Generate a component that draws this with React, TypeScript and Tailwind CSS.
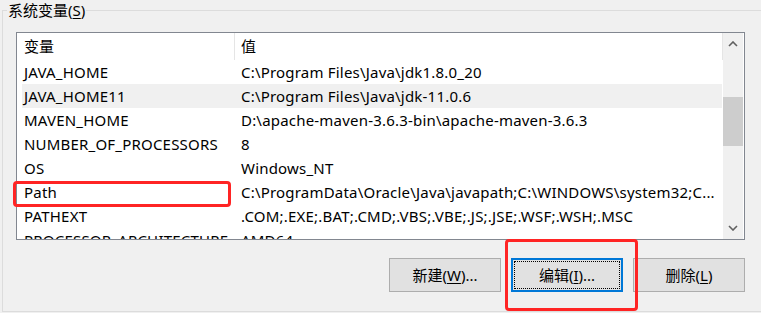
import React from "react";

const rows: [string, string][] = [
  ["JAVA_HOME", "C:\\Program Files\\Java\\jdk1.8.0_20"],
  ["JAVA_HOME11", "C:\\Program Files\\Java\\jdk-11.0.6"],
  ["MAVEN_HOME", "D:\\apache-maven-3.6.3-bin\\apache-maven-3.6.3"],
  ["NUMBER_OF_PROCESSORS", "8"],
  ["OS", "Windows_NT"],
  ["Path", "C:\\ProgramData\\Oracle\\Java\\javapath;C:\\WINDOWS\\system32;C..."],
  ["PATHEXT", ".COM;.EXE;.BAT;.CMD;.VBS;.VBE;.JS;.JSE;.WSF;.WSH;.MSC"],
  ["PROCESSOR_ARCHITECTURE", "AMD64"],
];

function Chevron({ down }: { down?: boolean }) {
  return (
    <svg width="10" height="6" viewBox="0 0 10 6">
      <polyline
        points={down ? "1,1 5,5 9,1" : "1,5 5,1 9,5"}
        fill="none"
        stroke="#606060"
        strokeWidth="1.6"
      />
    </svg>
  );
}

export default function App() {
  return (
    <div className="relative w-[761px] h-[313px] overflow-hidden bg-[#f0f0f0] text-[15px] text-black font-['Noto_Sans','Noto_Sans_CJK_SC',sans-serif]">
      <div className="relative ml-[2px] mt-[10px] w-[800px] h-[302px] border border-[#dcdcdc] pl-[13px] pt-[21px]">
        <div className="absolute left-[4px] top-[-11px] h-[20px] px-[1px] bg-[#f0f0f0] leading-[20px] whitespace-nowrap">
          系统变量(<span className="underline underline-offset-2">S</span>)
        </div>

        <div className="flex w-[729px] h-[208px] border border-[#828790] bg-white">
          <div className="w-[706px] flex flex-col overflow-hidden">
            <div className="flex h-[27px] shrink-0 items-center">
              <div className="w-[217px] pl-[7px]">变量</div>
              <div className="w-px h-full bg-[#e5e5e5]" />
              <div className="flex-1 pl-[6px]">值</div>
              <div className="w-px h-full bg-[#e5e5e5]" />
            </div>
            {rows.map(([k, v], i) => (
              <div
                key={k}
                className={`flex shrink-0 h-[24px] ml-[5px] w-[700px] items-center whitespace-nowrap tracking-[0.2px] ${
                  i === 1 ? "bg-[#f0f0f0]" : ""
                }`}
              >
                <div className="w-[212px] pl-[2px] overflow-hidden">{k}</div>
                <div className="flex-1 pl-[7px] overflow-hidden">{v}</div>
              </div>
            ))}
          </div>
          <div className="w-[20px] flex flex-col bg-[#f0f0f0]">
            <div className="h-[22px] flex items-center justify-center">
              <Chevron />
            </div>
            <div className="flex-1 flex flex-col">
              <div className="mt-[42px] h-[49px] bg-[#cdcdcd]" />
            </div>
            <div className="h-[22px] flex items-center justify-center">
              <Chevron down />
            </div>
          </div>
          <div className="w-px" />
        </div>

        <div className="flex w-[729px] justify-end gap-[10px] mt-[18px]">
          <button className="w-[112px] h-[34px] border border-[#adadad] bg-[#e1e1e1] flex items-center justify-center">
            新建(<span className="underline underline-offset-2">W</span>)...
          </button>
          <button className="w-[112px] h-[34px] border-2 border-[#0078d7] bg-[#e1e1e1] p-px">
            <div className="w-full h-full border border-dotted border-black flex items-center justify-center">
              编辑(<span className="underline underline-offset-2">I</span>)...
            </div>
          </button>
          <button className="w-[112px] h-[34px] border border-[#adadad] bg-[#e1e1e1] flex items-center justify-center">
            删除(<span className="underline underline-offset-2">L</span>)
          </button>
        </div>
      </div>

      <div className="absolute left-[13px] top-[181px] w-[218px] h-[26px] border-[3px] border-[#ff2424] rounded-[4px]" />
      <div className="absolute left-[505px] top-[239px] w-[133px] h-[72px] border-[3px] border-[#ff2424] rounded-[4px]" />
    </div>
  );
}
